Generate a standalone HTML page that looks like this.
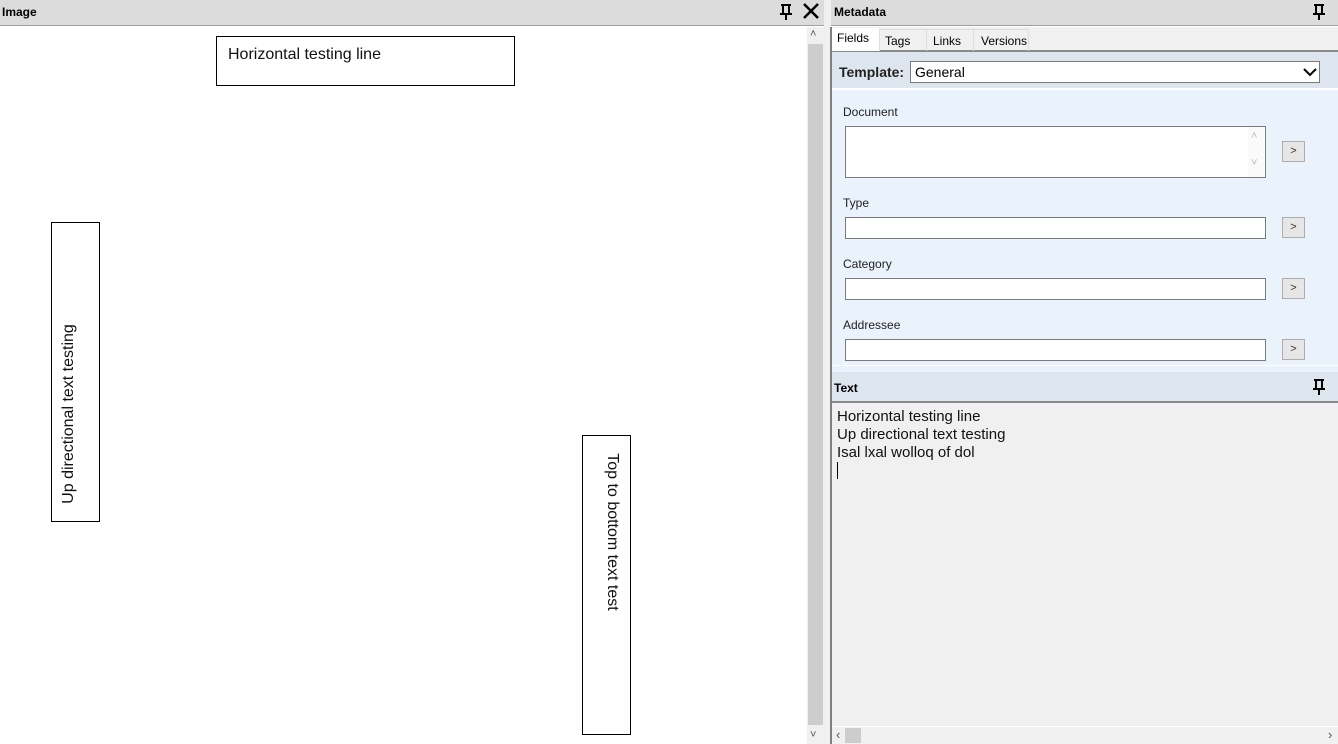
<!DOCTYPE html><html><head><style>
body{margin:0;width:1338px;height:744px;position:relative;overflow:hidden;background:#fff;font-family:"Liberation Sans",sans-serif}
.a{position:absolute}
.hdr{background:#dcdcdc;font-size:12px;font-weight:bold;color:#000}
.box{position:absolute;border:1px solid #000;background:#fff;font-size:16px;color:#111}
.inp{position:absolute;left:845px;width:419px;height:20px;border:1px solid #7a7a7a;background:#fff}
.btn{position:absolute;left:1282px;width:21px;height:19px;border:1px solid #adadad;background:#e6e6e6;font-size:11px;text-align:center;line-height:19px;color:#333}
.lbl{position:absolute;left:843px;font-size:12px;color:#222}
</style></head><body>
<div class="a hdr" style="left:0;top:0;width:826px;height:25px;border-bottom:1px solid #a0a0a0"><span class="a" style="left:2px;top:5px">Image</span></div>
<svg class="a" style="left:777px;top:2px" width="46" height="20"><path d="M4 3h10M6 3v9M12 3v9M3 12h12M9 12v6" stroke="#000" stroke-width="2" fill="none"/><path d="M27 2l14 14M41 2L27 16" stroke="#000" stroke-width="2.5"/></svg>
<div class="box" style="left:216px;top:36px;width:297px;height:48px"><span class="a" style="left:11px;top:9px">Horizontal testing line</span></div>
<div class="box" style="left:51px;top:222px;width:47px;height:298px"><span class="a" style="left:-133px;top:182px;width:300px;text-align:center;transform:rotate(-90deg)">Up directional text testing</span></div>
<div class="box" style="left:582px;top:435px;width:47px;height:298px"><span class="a" style="left:-121px;top:87px;width:300px;text-align:center;transform:rotate(90deg)">Top to bottom text test</span></div>
<div class="a" style="left:807px;top:27px;width:17px;height:717px;background:#f0f0f0"></div>
<div class="a" style="left:808px;top:44px;width:15px;height:681px;background:#cdcdcd"></div>
<span class="a" style="left:810px;top:28px;font-size:11px;color:#555">&#x2C4;</span>
<span class="a" style="left:810px;top:729px;font-size:11px;color:#555">&#x2C5;</span>
<div class="a" style="left:824px;top:0;width:7px;height:744px;background:#f0f0f0"></div>
<div class="a" style="left:830px;top:27px;width:2px;height:717px;background:#808080"></div>
<div class="a hdr" style="left:831px;top:0;width:507px;height:25px;border-bottom:1px solid #a0a0a0"><span class="a" style="left:3px;top:5px">Metadata</span></div>
<svg class="a" style="left:1310px;top:2px" width="20" height="20"><path d="M4 3h10M6 3v9M12 3v9M3 12h12M9 12v6" stroke="#000" stroke-width="2" fill="none"/></svg>
<div class="a" style="left:832px;top:27px;width:506px;height:23px;background:#f0f0f0;border-bottom:2px solid #8a8a8a"></div>
<div class="a" style="left:832px;top:28px;width:47px;height:23px;background:#fff;font-size:12px"><span class="a" style="left:5px;top:3px">Fields</span></div>
<div class="a" style="left:879px;top:29px;width:46px;height:21px;border:1px solid #ddd;border-bottom:0;font-size:12px"><span class="a" style="left:5px;top:4px">Tags</span></div>
<div class="a" style="left:926px;top:29px;width:46px;height:21px;border:1px solid #ddd;border-bottom:0;font-size:12px"><span class="a" style="left:6px;top:4px">Links</span></div>
<div class="a" style="left:973px;top:29px;width:54px;height:21px;border:1px solid #ddd;border-bottom:0;font-size:12px"><span class="a" style="left:7px;top:4px">Versions</span></div>
<div class="a" style="left:832px;top:52px;width:506px;height:36px;background:#dde6ee"></div>
<span class="a" style="left:839px;top:64px;font-size:14px;font-weight:bold;color:#222">Template:</span>
<div class="a" style="left:910px;top:61px;width:408px;height:20px;border:1px solid #7a7a7a;background:#fff;font-size:14px"><span class="a" style="left:4px;top:2px">General</span>
<svg class="a" style="left:392px;top:5px" width="14" height="10"><path d="M1 2l6 6 6-6" stroke="#000" stroke-width="2" fill="none"/></svg></div>
<div class="a" style="left:832px;top:90px;width:506px;height:275px;background:#eaf2fb"></div>
<div class="lbl" style="top:105px">Document</div>
<div class="inp" style="top:126px;height:50px"></div>
<div class="a" style="left:1248px;top:127px;width:16px;height:50px;background:#fafafa;color:#bbb;font-size:11px"><span class="a" style="left:3px;top:3px">&#x2C4;</span><span class="a" style="left:3px;top:30px">&#x2C5;</span></div>
<div class="btn" style="top:141px">&gt;</div>
<div class="lbl" style="top:196px">Type</div><div class="inp" style="top:217px"></div><div class="btn" style="top:217px">&gt;</div>
<div class="lbl" style="top:257px">Category</div><div class="inp" style="top:278px"></div><div class="btn" style="top:278px">&gt;</div>
<div class="lbl" style="top:318px">Addressee</div><div class="inp" style="top:339px"></div><div class="btn" style="top:339px">&gt;</div>
<div class="a" style="left:832px;top:366px;width:506px;height:6px;background:#eaf2fb"></div>
<div class="a hdr" style="left:832px;top:372px;width:506px;height:29px;background:#dde6ee;border-bottom:2px solid #8a8a8a"><span class="a" style="left:2px;top:9px">Text</span></div>
<svg class="a" style="left:1310px;top:377px" width="20" height="20"><path d="M4 3h10M6 3v9M12 3v9M3 12h12M9 12v6" stroke="#000" stroke-width="2" fill="none"/></svg>
<div class="a" style="left:832px;top:403px;width:506px;height:341px;background:#f0f0f0;font-size:15px;line-height:18px;color:#111"><div style="padding:5px 5px">Horizontal testing line<br>Up directional text testing<br>Isal lxal wolloq of dol<br><span style="border-left:1px solid #000">&nbsp;</span></div></div>
<div class="a" style="left:832px;top:726px;width:506px;height:1px;background:#fff"></div>
<div class="a" style="left:845px;top:728px;width:16px;height:15px;background:#cdcdcd"></div>
<span class="a" style="left:836px;top:727px;font-size:13px;color:#555">&#x2039;</span>
<span class="a" style="left:1328px;top:727px;font-size:13px;color:#555">&#x203A;</span>
</body></html>
